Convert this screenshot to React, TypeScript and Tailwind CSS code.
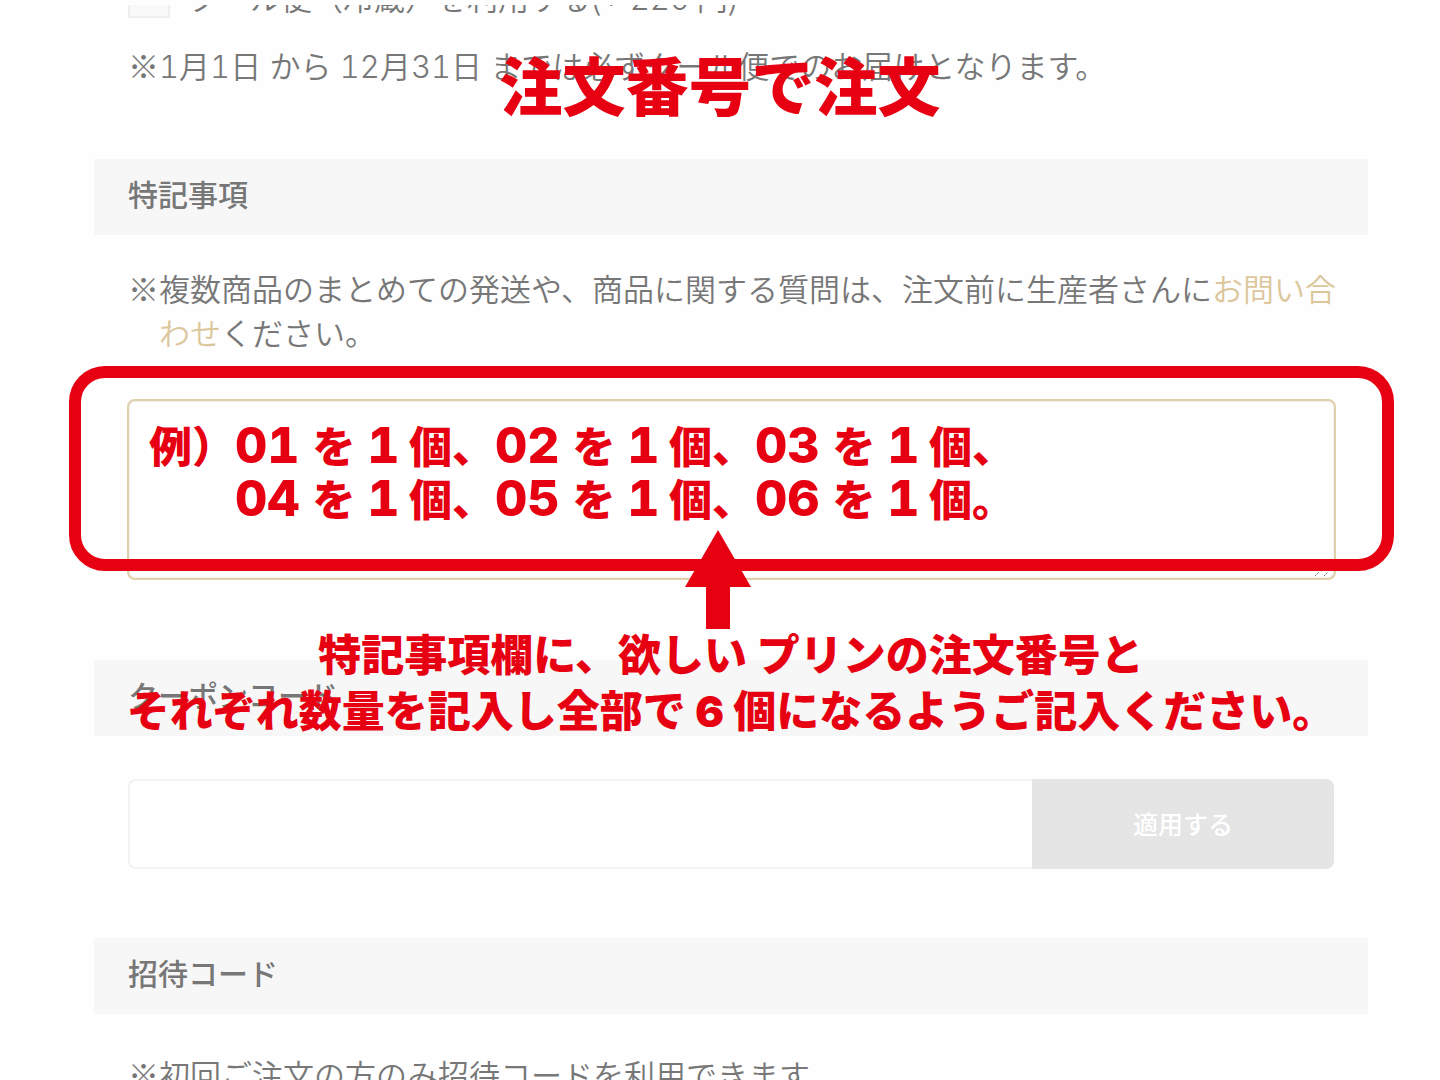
import { Fragment, type ReactNode } from "react";

const COUPON_ID = "coupon-code";
const REMARKS_ID = "remarks";

// Each row of the sample order: [item number, quantity, trailing mark].
const SAMPLE_ROWS = [
  [
    ["01", "1", "、"],
    ["02", "1", "、"],
    ["03", "1", "、"],
  ],
  [
    ["04", "1", "、"],
    ["05", "1", "、"],
    ["06", "1", "。"],
  ],
];

function SectionTitle({ children }: { children: ReactNode }) {
  return (
    <h2 className="h-[76px] bg-[#f7f7f7] px-[34px] text-[30px] leading-[68px] font-medium text-[#777]">
      {children}
    </h2>
  );
}

function Digits({ children }: { children: ReactNode }) {
  return (
    <span className="font-['Inter'] text-[50px] leading-none font-extrabold tabular-nums">
      {children}
    </span>
  );
}

// Thin latin digits inside the body copy.
function Num({ children }: { children: ReactNode }) {
  return <span className="font-['Inter'] leading-none tabular-nums">{children}</span>;
}

function SampleOrder() {
  return (
    <div className="pointer-events-none absolute top-[19px] left-[22px] grid grid-cols-[86px_260px_260px_260px] text-[43px] font-black whitespace-nowrap text-[#e60012]">
      {SAMPLE_ROWS.map((row, i) => (
        <Fragment key={i}>
          <span className="h-[53px] leading-[53px]">{i === 0 ? "例）" : ""}</span>
          {row.map(([item, count, mark]) => (
            <span key={item} className="flex h-[53px] items-baseline leading-[53px]">
              <span className="w-[78px]">
                <Digits>{item}</Digits>
              </span>
              <span className="w-[55px]">を</span>
              <span className="w-[42px]">
                <Digits>{count}</Digits>
              </span>
              個{mark}
            </span>
          ))}
        </Fragment>
      ))}
    </div>
  );
}

function UpArrow() {
  return (
    <svg
      viewBox="0 0 66 99"
      className="absolute top-[131px] left-[calc(50%-14px)] h-[99px] w-[66px] -translate-x-1/2"
      aria-hidden="true"
    >
      <path d="M33 0 66 57H45V99H21V57H0Z" fill="#e60012" />
    </svg>
  );
}

export default function App() {
  return (
    <main className="relative h-screen overflow-hidden bg-[#fefefe] pt-[5px] pr-[72px] pl-[94px] font-['Noto_Sans_CJK_JP',sans-serif] text-[31px] text-[#777]">
      {/* Option row scrolled almost out of view */}
      <div className="flex h-[13px] flex-col justify-end overflow-hidden px-[34px]">
        <label className="flex h-[42px] shrink-0 items-center gap-[18px] leading-[42px] font-[350]">
          <input
            type="checkbox"
            className="size-[42px] appearance-none border-2 border-[#eee] bg-[#f9f9f9]"
          />
          <span>
            クール便（冷蔵）を利用する(<Num>+ 220</Num> 円)
          </span>
        </label>
      </div>
      <p className="mt-[26px] px-[34px] leading-[42px] font-[350] whitespace-nowrap">
        ※<Num>1</Num>月<Num>1</Num>日<Num> </Num>から<Num> 12</Num>月<Num>31</Num>日
        <Num> </Num>までは必ずクール便でのお届けとなります。
      </p>

      <h1 className="absolute inset-x-0 top-[45px] text-center text-[63px] leading-[76px] font-black text-[#e60012]">
        注文番号で注文
      </h1>

      <section className="mt-[73px]">
        <SectionTitle>
          <label htmlFor={REMARKS_ID}>特記事項</label>
        </SectionTitle>
        <p className="mt-[31px] pr-[24px] pl-[65px] -indent-[31px] leading-[44px] font-[350]">
          ※複数商品のまとめての発送や、商品に関する質問は、注文前に生産者さんに
          <a href="#contact" className="text-[#dcc79c]">
            お問い合わせ
          </a>
          ください。
        </p>

        <div className="relative mt-[45px] mr-[32px] ml-[33px]">
          <textarea
            id={REMARKS_ID}
            className="block h-[181px] w-full resize-none rounded-[8px] border-2 border-[#e0cfa9] bg-white shadow-[inset_0_0_2px_1px_#eee]"
          />
          <svg
            viewBox="0 0 14 4"
            className="absolute right-[7px] bottom-[4px] h-[4px] w-[14px]"
            aria-hidden="true"
          >
            <path d="M0 4 4 0M9 4 13 0" stroke="#777" strokeDasharray="2 1" />
          </svg>
          <div className="pointer-events-none absolute -top-[33px] -right-[58px] -left-[58px] h-[205px] rounded-[36px] border-[12px] border-[#e60012]" />
          <SampleOrder />
          <UpArrow />
          <p className="pointer-events-none absolute top-[225px] -right-[32px] -left-[33px] text-center text-[43px] leading-[56px] font-black whitespace-nowrap text-[#e60012]">
            特記事項欄に、欲しい プリンの注文番号と
            <br />
            それぞれ数量を記入し全部で <Num>6</Num> 個になるようご記入ください。
          </p>
        </div>
      </section>

      <section className="mt-[80px]">
        <SectionTitle>
          <label htmlFor={COUPON_ID}>クーポンコード</label>
        </SectionTitle>
        <div className="mt-[43px] mr-[34px] ml-[34px] flex h-[90px]">
          <input
            id={COUPON_ID}
            type="text"
            className="min-w-0 grow rounded-l-[8px] border-2 border-r-0 border-[#f2f2f2] bg-white px-4"
          />
          <button
            type="button"
            className="w-[302px] rounded-r-[8px] bg-[#e5e5e5] text-[25px] font-medium text-white"
          >
            適用する
          </button>
        </div>
      </section>

      <section className="mt-[69px]">
        <SectionTitle>招待コード</SectionTitle>
        <p className="mt-[38px] px-[34px] leading-[44px] font-[350]">
          ※初回ご注文の方のみ招待コードを利用できます。
        </p>
      </section>
    </main>
  );
}
